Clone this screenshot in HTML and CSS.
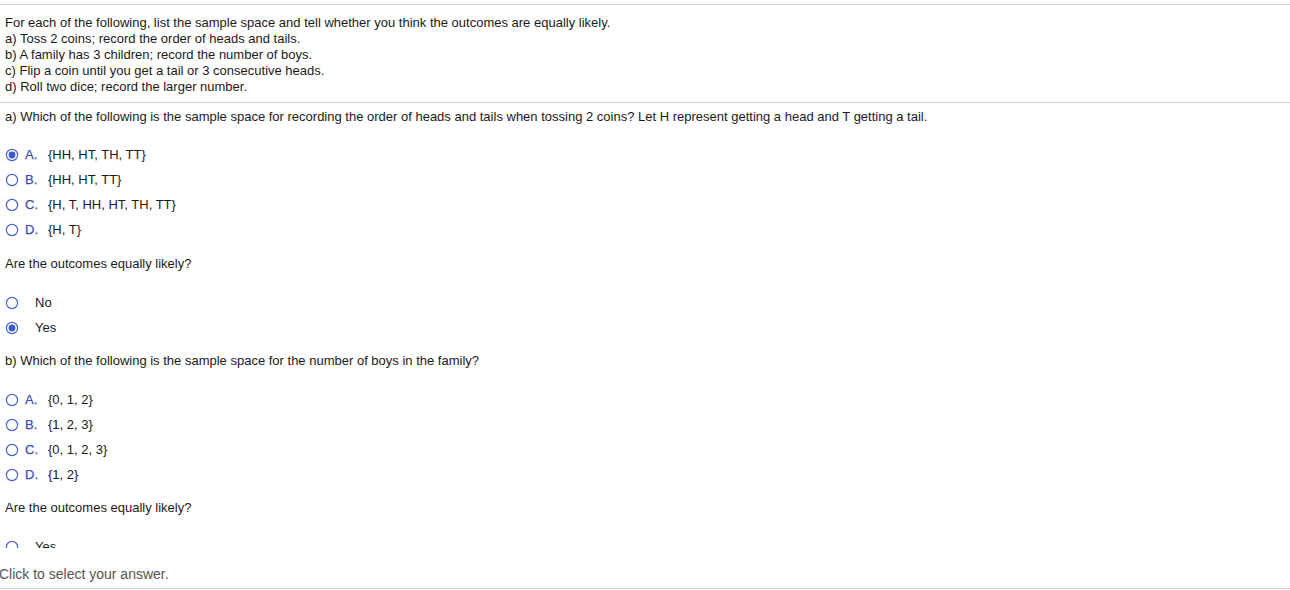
FILE: index.html
```html
<!DOCTYPE html>
<html>
<head>
<meta charset="utf-8">
<link rel="stylesheet" href="styles.css">
</head>
<body>
<div class="page">
  <div class="viewport">
    <div class="intro">
      <div>For each of the following, list the sample space and tell whether you think the outcomes are equally likely.</div>
      <div>a) Toss 2 coins; record the order of heads and tails.</div>
      <div>b) A family has 3 children; record the number of boys.</div>
      <div>c) Flip a coin until you get a tail or 3 consecutive heads.</div>
      <div>d) Roll two dice; record the larger number.</div>
    </div>
    <div class="part">
      <p class="q">a) Which of the following is the sample space for recording the order of heads and tails when tossing 2 coins? Let H represent getting a head and T getting a tail.</p>
      <div class="choices first">
        <div class="opt"><svg class="radio" viewBox="0 0 14 14"><circle cx="7" cy="7" r="5.6" class="ring"/><circle cx="7" cy="7" r="3.4" class="dot"/></svg><span class="let">A.</span><span>{HH, HT, TH, TT}</span></div>
        <div class="opt"><svg class="radio" viewBox="0 0 14 14"><circle cx="7" cy="7" r="5.6" class="ring"/></svg><span class="let">B.</span><span>{HH, HT, TT}</span></div>
        <div class="opt"><svg class="radio" viewBox="0 0 14 14"><circle cx="7" cy="7" r="5.6" class="ring"/></svg><span class="let">C.</span><span>{H, T, HH, HT, TH, TT}</span></div>
        <div class="opt"><svg class="radio" viewBox="0 0 14 14"><circle cx="7" cy="7" r="5.6" class="ring"/></svg><span class="let">D.</span><span>{H, T}</span></div>
      </div>
      <p class="q">Are the outcomes equally likely?</p>
      <div class="choices">
        <div class="yn"><svg class="radio" viewBox="0 0 14 14"><circle cx="7" cy="7" r="5.6" class="ring"/></svg><span>No</span></div>
        <div class="yn"><svg class="radio" viewBox="0 0 14 14"><circle cx="7" cy="7" r="5.6" class="ring"/><circle cx="7" cy="7" r="3.4" class="dot"/></svg><span>Yes</span></div>
      </div>
      <p class="q">b) Which of the following is the sample space for the number of boys in the family?</p>
      <div class="choices">
        <div class="opt"><svg class="radio" viewBox="0 0 14 14"><circle cx="7" cy="7" r="5.6" class="ring"/></svg><span class="let">A.</span><span>{0, 1, 2}</span></div>
        <div class="opt"><svg class="radio" viewBox="0 0 14 14"><circle cx="7" cy="7" r="5.6" class="ring"/></svg><span class="let">B.</span><span>{1, 2, 3}</span></div>
        <div class="opt"><svg class="radio" viewBox="0 0 14 14"><circle cx="7" cy="7" r="5.6" class="ring"/></svg><span class="let">C.</span><span>{0, 1, 2, 3}</span></div>
        <div class="opt"><svg class="radio" viewBox="0 0 14 14"><circle cx="7" cy="7" r="5.6" class="ring"/></svg><span class="let">D.</span><span>{1, 2}</span></div>
      </div>
      <p class="q">Are the outcomes equally likely?</p>
      <div class="choices">
        <div class="yn"><svg class="radio" viewBox="0 0 14 14"><circle cx="7" cy="7" r="5.6" class="ring"/></svg><span>Yes</span></div>
      </div>
    </div>
  </div>
  <div class="footer">Click to select your answer.</div>
</div>
</body>
</html>
```
FILE: styles.css
```css
html, body {
  margin: 0;
  padding: 0;
  background: #fff;
}
body {
  font-family: "Liberation Sans", Arial, sans-serif;
  font-size: 13px;
  color: #1a1a1a;
}
.page {
  padding-top: 4px;
}
.viewport {
  border-top: 1px solid #c9ceda;
  height: 543px;
  overflow: hidden;
}
.intro {
  padding: 10px 5px 7px;
  line-height: 16px;
  border-bottom: 1px solid #c9ceda;
}
.part {
  padding: 6px 5px 0;
}
.q {
  margin: 0;
  line-height: 16px;
}
.choices {
  padding: 18px 0 13px;
}
.choices.first {
  padding: 17px 0 14px;
}
.opt, .yn {
  display: flex;
  align-items: center;
  height: 25px;
}
.radio {
  width: 14px;
  height: 14px;
  flex: none;
}
.ring {
  fill: #fff;
  stroke: #4a63d2;
  stroke-width: 1.2;
}
.dot {
  fill: #3a57d4;
}
.let {
  color: #3d4cbd;
  width: 23px;
  margin-left: 6px;
  -webkit-text-stroke: 0.25px #3d4cbd;
}
.yn .radio + span {
  margin-left: 16px;
}
.footer {
  padding-top: 18px;
  height: 22px;
  line-height: 16px;
  font-size: 14px;
  color: #555;
  margin-left: -1px;
  border-bottom: 1px solid #c9ceda;
}
```
